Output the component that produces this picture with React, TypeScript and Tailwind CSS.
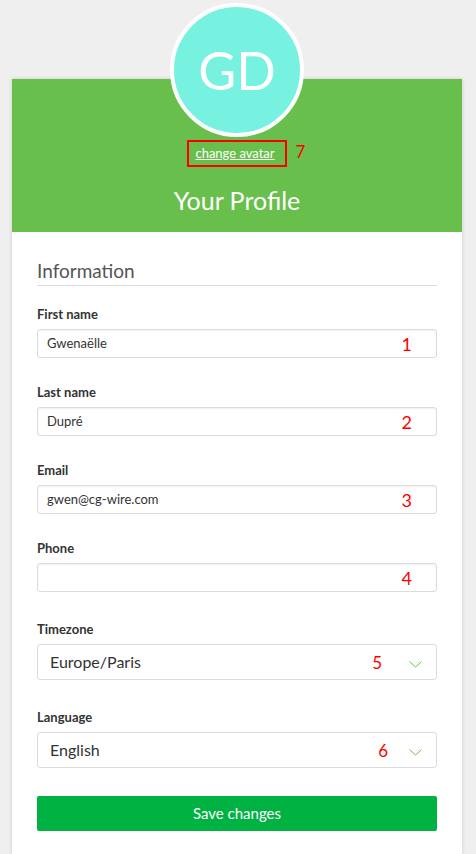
const font = { fontFamily: "Lato, 'Noto Sans', sans-serif" }

function Field({ label, value, mark, first }: { label: string; value: string; mark: string; first?: boolean }) {
  return (
    <div className={first ? "mt-[18px]" : "mt-[24px]"}>
      <div className="h-[20px] text-[13px] leading-[20px] font-bold text-[#333]">{label}</div>
      <div className="relative mt-[5px] h-[29px] rounded-[3px] border border-[#dcdcdc] bg-white shadow-[inset_0_1px_2px_rgba(0,0,0,0.06)] px-[9px] flex items-center text-[13px] text-[#333]">
        {value}
        <span className="absolute right-[24px] top-1/2 -translate-y-1/2 text-[18px] leading-none text-[#f00]">{mark}</span>
      </div>
    </div>
  )
}

function Select({ label, value, mark, right }: { label: string; value: string; mark: string; right: string }) {
  return (
    <div className="mt-[27px]">
      <div className="h-[20px] text-[13px] leading-[20px] font-bold text-[#333]">{label}</div>
      <div className="relative mt-[5px] h-[36px] rounded-[3px] border border-[#dcdcdc] bg-white px-[12px] flex items-center text-[16px] text-[#333]">
        {value}
        <span className={`absolute top-[9px] text-[17px] leading-none text-[#f00] ${right}`}>{mark}</span>
        <svg className="absolute right-[14px] top-[16px]" width="13" height="7" viewBox="0 0 13 7" fill="none">
          <polyline points="0.5,0.5 6.5,6 12.5,0.5" stroke="#6abf4b" strokeWidth="1" />
        </svg>
      </div>
    </div>
  )
}

export default function App() {
  return (
    <div className="min-h-[854px] bg-[#efefef] pt-[79px]" style={font}>
      <div className="ml-[12px] w-[450px] bg-white shadow-[0_0_4px_rgba(0,0,0,0.15)]">
        {/* header */}
        <div className="flex flex-col items-center bg-[#68bf4b] pb-[16px]">
          <div className="-mt-[76px] flex h-[134px] w-[134px] items-center justify-center rounded-full border-[4px] border-white bg-[#77f2e1] text-[52px] text-white">
            GD
          </div>
          <div className="relative mt-[3px]">
            <div className="border-2 border-[#f00] pl-[6px] pr-[10px] h-[27px] flex items-center">
              <span className="text-[13px] text-white underline">change avatar</span>
            </div>
            <span className="absolute left-full top-[3px] ml-[9px] text-[17px] leading-none text-[#f00]">7</span>
          </div>
          <h1 className="mt-[17px] text-[25px] leading-[32px] text-white">Your Profile</h1>
        </div>

        {/* body */}
        <div className="px-[25px] pt-[27px] pb-[24px]">
          <h2 className="border-b border-[#ddd] pb-[2px] text-[19px] leading-[24px] text-[#555]">Information</h2>
          <Field label="First name" value="Gwenaëlle" mark="1" first />
          <Field label="Last name" value="Dupré" mark="2" />
          <Field label="Email" value="gwen@cg-wire.com" mark="3" />
          <Field label="Phone" value="" mark="4" />
          <Select label="Timezone" value="Europe/Paris" mark="5" right="right-[54px]" />
          <Select label="Language" value="English" mark="6" right="right-[48px]" />
          <button className="mt-[28px] h-[35px] w-full rounded-[2px] bg-[#00b242] text-[15px] text-white">Save changes</button>
        </div>
      </div>
    </div>
  )
}
